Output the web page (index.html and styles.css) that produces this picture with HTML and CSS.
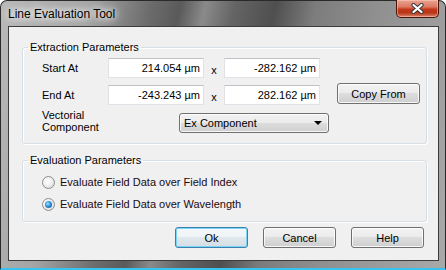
FILE: index.html
```html
<!DOCTYPE html>
<html lang="en">
<head>
  <meta charset="UTF-8" />
  <title>Line Evaluation Tool</title>
  <link rel="stylesheet" href="styles.css">
</head>
<body>

<div class="window">
  <div class="titlebar">
    <span class="title">Line Evaluation Tool</span>
    <span class="close">
      <svg width="15" height="11" viewBox="0 0 15 11">
        <path d="M3.5 2 L11.5 9 M11.5 2 L3.5 9" stroke="#3a3a3a" stroke-width="4.2" stroke-linecap="round"/>
        <path d="M3.5 2 L11.5 9 M11.5 2 L3.5 9" stroke="#fff" stroke-width="2.2" stroke-linecap="round"/>
      </svg>
    </span>
  </div>

  <div class="client">
    <fieldset class="group extract">
      <legend>Extraction Parameters</legend>
      <div class="coords">
        <label>Start At</label>
        <input class="textbox" type="text" value="214.054 µm" readonly>
        <span class="sep">x</span>
        <input class="textbox" type="text" value="-282.162 µm" readonly>
        <span></span>
        <span></span>

        <label>End At</label>
        <input class="textbox" type="text" value="-243.243 µm" readonly>
        <span class="sep">x</span>
        <input class="textbox" type="text" value="282.162 µm" readonly>
        <span></span>
        <button class="btn copy">Copy From</button>
      </div>
      <div class="component-row">
        <label class="two-line">Vectorial<br>Component</label>
        <div class="combo">
          <span>Ex Component</span>
          <span class="arrow"></span>
        </div>
      </div>
    </fieldset>

    <fieldset class="group evaluate">
      <legend>Evaluation Parameters</legend>
      <div class="options">
        <label class="radio-row"><span class="radio"></span>Evaluate Field Data over Field Index</label>
        <label class="radio-row"><span class="radio checked"></span>Evaluate Field Data over Wavelength</label>
      </div>
    </fieldset>

    <div class="actions">
      <button class="btn default">Ok</button>
      <button class="btn">Cancel</button>
      <button class="btn">Help</button>
    </div>
  </div>
</div>

</body>
</html>
```

FILE: styles.css
```css
body {
  margin: 0;
  padding: 0;
  font-family: "Liberation Sans", Arial, sans-serif;
  font-size: 11px;
  color: #000;
  background: #fff;
}
.window {
  width: 446px;
  height: 270px;
  box-sizing: border-box;
  display: flex;
  flex-direction: column;
  padding: 0 7px 8px 8px;
  border: 1px solid #2a2a2a;
  border-bottom: 2px solid #35c4ee;
  border-radius: 7px 7px 0 0;
  background: linear-gradient(102deg, #b9b9b9 0%, #a4a4a4 18%, #6c6c6c 30%, #5a5a5a 36%, #8a8a8a 41%, #646464 47%, #4f4f4f 55%, #7c7c7c 63%, #8f8f8f 75%, #a9a9a9 100%);
}
.titlebar {
  height: 26px;
  display: flex;
  align-items: flex-start;
  margin: 0 -1px 0 -1px;
}
.title {
  font-size: 12px;
  line-height: 14px;
  margin-top: 6px;
  padding-left: 0;
  color: #000;
  text-shadow: 0 0 6px #fff, 0 0 10px #fff, 0 0 14px rgba(255,255,255,.8);
}
.close {
  margin-left: auto;
  width: 43px;
  height: 18px;
  box-sizing: border-box;
  margin-top: -1px;
  border: 1px solid #4a140a;
  border-top: none;
  border-radius: 0 0 5px 5px;
  background: linear-gradient(#e9a392 0%, #dc7a62 40%, #c2391c 55%, #b93518 75%, #d9836b 100%);
  box-shadow: inset 0 0 0 1px rgba(255,210,200,.5);
  display: flex;
  align-items: center;
  justify-content: center;
}
.client {
  flex: 1;
  background: #f0f0f0;
  box-shadow: 0 0 0 1px #3c3c3c;
  display: flex;
  flex-direction: column;
}
.group {
  margin: 0 11px 0 13px;
  padding: 4px 5px 10px 5px;
  border: 1px solid #d5dfe5;
  border-radius: 3px;
  box-shadow: inset 1px 1px 0 #fff, 1px 1px 0 #fff;
  min-width: 0;
}
.group legend {
  padding: 0 2px;
  line-height: 14px;
}
.extract {
  margin-top: 13px;
}
.evaluate {
  margin-top: 9px;
  padding-bottom: 6px;
}
.coords {
  margin-left: 14px;
  display: grid;
  grid-template-columns: 66px 96px 20px 96px 17px 83px;
  grid-template-rows: 20px 20px;
  row-gap: 7px;
  align-items: center;
}
.textbox {
  font: inherit;
  height: 20px;
  width: 96px;
  box-sizing: border-box;
  margin: 0;
  padding: 0 3px 0 2px;
  text-align: right;
  color: #000;
  background: #fff;
  border: 1px solid #dfe3e8;
  border-top-color: #bfc3c8;
  outline: none;
}
.sep {
  text-align: center;
  padding-top: 3px;
}
.btn {
  font: inherit;
  color: #000;
  height: 21px;
  box-sizing: border-box;
  margin: 0;
  padding: 0;
  border: 1px solid #707070;
  border-radius: 3px;
  background: linear-gradient(#f2f2f2 0%, #ebebeb 49%, #dddddd 50%, #cfcfcf 100%);
  box-shadow: inset 0 0 0 1px rgba(255,255,255,.8);
}
.copy {
  width: 83px;
  align-self: start;
  margin-top: -2px;
}
.component-row {
  margin-left: 14px;
  margin-top: 4px;
  display: flex;
  align-items: flex-end;
}
.two-line {
  width: 137px;
  line-height: 12px;
}
.combo {
  width: 150px;
  height: 20px;
  box-sizing: border-box;
  border: 1px solid #707070;
  border-radius: 3px;
  background: linear-gradient(#f2f2f2 0%, #ebebeb 49%, #dddddd 50%, #cfcfcf 100%);
  box-shadow: inset 0 0 0 1px rgba(255,255,255,.8);
  display: flex;
  align-items: center;
  padding: 0 6px 0 4px;
}
.arrow {
  margin-left: auto;
  width: 0;
  height: 0;
  border-left: 4px solid transparent;
  border-right: 4px solid transparent;
  border-top: 4px solid #000;
}
.options {
  margin-left: 14px;
  display: flex;
  flex-direction: column;
}
.radio-row {
  height: 22px;
  display: flex;
  align-items: center;
  gap: 5px;
  color: #1a0a10;
}
.radio {
  width: 13px;
  height: 13px;
  box-sizing: border-box;
  border-radius: 50%;
  border: 1px solid #8e8f8f;
  background: radial-gradient(circle at 40% 40%, #ffffff 0%, #f0f0f0 45%, #cfcfcf 100%);
  display: flex;
  align-items: center;
  justify-content: center;
}
.radio.checked::after {
  content: "";
  width: 7px;
  height: 7px;
  border-radius: 50%;
  background: radial-gradient(circle at 40% 40%, #a8e4ff 0%, #2c93dc 45%, #0b3f74 100%);
}
.actions {
  margin-top: 5px;
  padding-right: 14px;
  display: flex;
  justify-content: flex-end;
  gap: 15px;
}
.actions .btn {
  width: 73px;
}
.btn.default {
  border-color: #3c7fb1;
  box-shadow: inset 0 0 0 1px #7ad5f5;
  background: linear-gradient(#f4f8fa 0%, #eef3f6 49%, #e0e8ed 50%, #d4dde3 100%);
}
```
